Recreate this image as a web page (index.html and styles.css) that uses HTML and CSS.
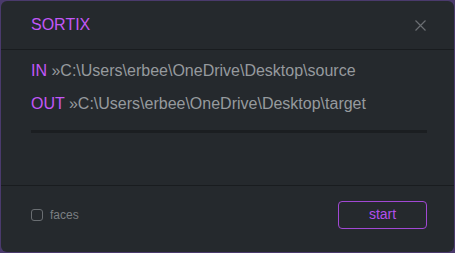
FILE: index.html
```html
<!DOCTYPE html>
<html lang="en">
  <head>
    <meta charset="UTF-8" />
    <meta name="viewport" content="width=device-width, initial-scale=1.0" />
    <title>Sortix</title>
    <link rel="stylesheet" href="styles.css">
  </head>
  <body>
    <div class="modal">
      <div class="modal-header">
        <h1 class="title">SORTIX</h1>
        <button class="close" type="button" aria-label="Close">
          <svg width="11" height="11" viewBox="0 0 11 11">
            <path d="M0.5 0.5 L10.5 10.5 M10.5 0.5 L0.5 10.5" stroke="#6a6e72" stroke-width="1.2" fill="none" />
          </svg>
        </button>
      </div>
      <div class="modal-body">
        <p class="path"><span class="label">IN</span> »C:\Users\erbee\OneDrive\Desktop\source</p>
        <p class="path"><span class="label">OUT</span> »C:\Users\erbee\OneDrive\Desktop\target</p>
        <div class="progress"></div>
      </div>
      <div class="modal-footer">
        <label class="check">
          <span class="box"></span>
          faces
        </label>
        <button class="start" type="button">start</button>
      </div>
    </div>
  </body>
</html>
```

FILE: styles.css
```css
body {
  margin: 0;
  padding: 1px;
  height: 253px;
  box-sizing: border-box;
  background: #4a3a6c;
  font-family: "Liberation Sans", Arial, sans-serif;
}

.modal {
  height: 251px;
  background: #25292d;
  border-radius: 6px;
  display: flex;
  flex-direction: column;
}

.modal-header {
  height: 48px;
  border-bottom: 1px solid #191c1f;
  display: flex;
  align-items: center;
  justify-content: space-between;
  padding: 0 28px 0 30px;
}

.title {
  margin: 0;
  font-size: 16px;
  font-weight: normal;
  color: #c257f7;
}

.close {
  background: none;
  border: none;
  padding: 0;
  display: flex;
}

.modal-body {
  height: 136px;
  border-bottom: 1px solid #191c1f;
  padding: 0 27px 0 30px;
  box-sizing: border-box;
  display: flex;
  flex-direction: column;
}

.path {
  margin: 0;
  font-size: 16px;
  color: #969a9e;
  line-height: 20px;
}

.path:first-child {
  margin-top: 11px;
}

.path + .path {
  margin-top: 13px;
}

.label {
  color: #c257f7;
}

.progress {
  height: 3px;
  background: #1b1e21;
  margin-top: 16px;
}

.modal-footer {
  flex: 1;
  display: flex;
  align-items: center;
  justify-content: space-between;
  padding: 0 27px 8px 30px;
}

.check {
  display: flex;
  align-items: center;
  gap: 7px;
  font-size: 12px;
  color: #7b7f83;
}

.box {
  width: 10px;
  height: 10px;
  border: 1px solid #6a6e72;
  border-radius: 3px;
}

.start {
  width: 89px;
  height: 28px;
  background: none;
  border: 1px solid #a148d4;
  border-radius: 4px;
  color: #b34fec;
  font-family: "Liberation Sans", Arial, sans-serif;
  font-size: 14px;
  padding: 0 0 3px;
}
```
